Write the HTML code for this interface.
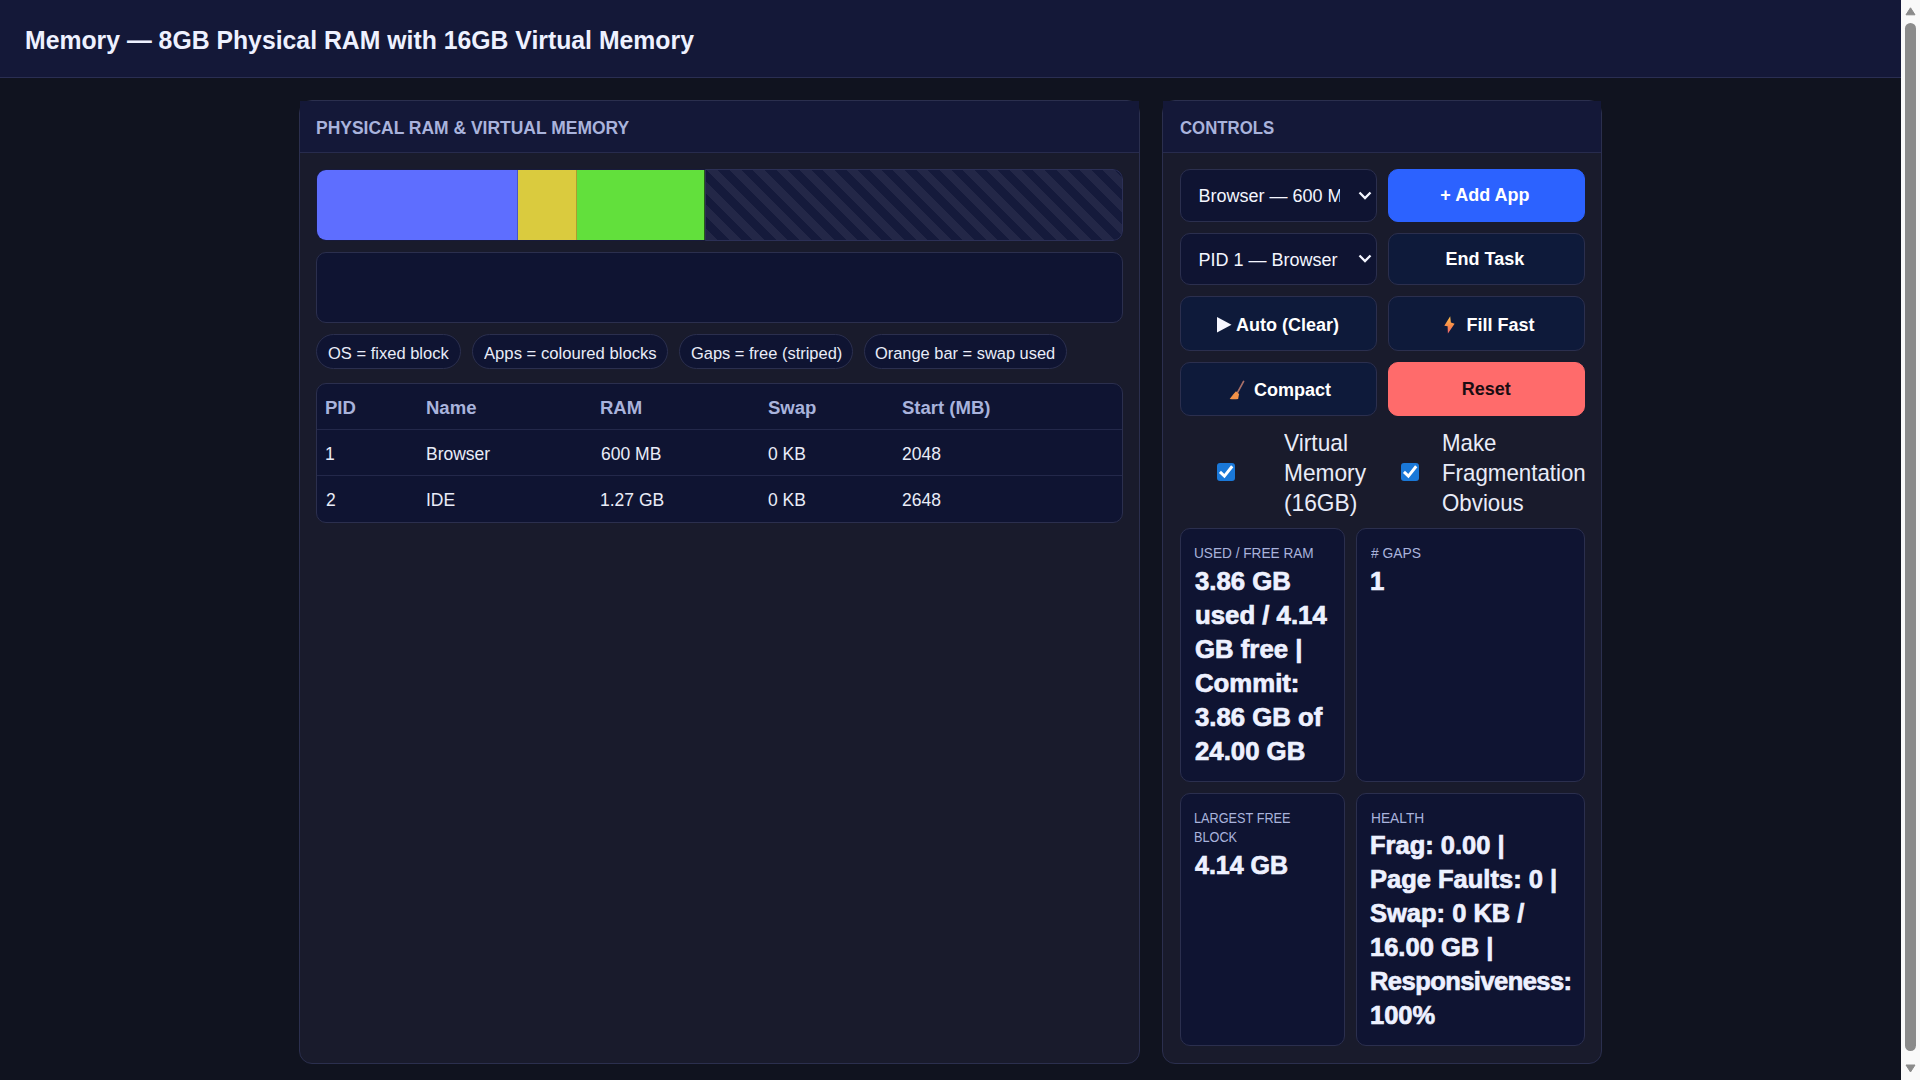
<!DOCTYPE html>
<html><head><meta charset="utf-8"><title>Memory</title>
<style>
html,body{margin:0;padding:0;width:1920px;height:1080px;overflow:hidden;background:#10131f;}
body{position:relative;font-family:"Liberation Sans",sans-serif;}
.b{position:absolute;box-sizing:border-box;}
.t{position:absolute;white-space:nowrap;}
</style></head><body>
<div class="b" style="left:0px;top:0px;width:1901px;height:77px;background:#141838;"></div>
<div class="b" style="left:0px;top:77px;width:1901px;height:1px;background:#2a2e52;"></div>
<div class="t" style="left:24.59px;top:23.70px;font-size:26.16px;line-height:33px;color:#eef1ff;font-weight:700;transform:scaleX(0.9476);transform-origin:0 0;">Memory — 8GB Physical RAM with 16GB Virtual Memory</div>
<div class="b" style="left:299px;top:100px;width:841px;height:964px;background:#191b2c;border:1px solid #2b2f4e;border-radius:13px;"></div>
<div class="b" style="left:300px;top:101px;width:839px;height:51px;background:#141838;"></div>
<div class="b" style="left:300px;top:152px;width:839px;height:1px;background:#272b4d;"></div>
<div class="t" style="left:315.93px;top:115.90px;font-size:18.75px;line-height:23px;color:#a9b3dc;font-weight:700;transform:scaleX(0.9316);transform-origin:0 0;">PHYSICAL RAM &amp; VIRTUAL MEMORY</div>
<div class="b" style="left:1162px;top:100px;width:440px;height:964px;background:#191b2c;border:1px solid #2b2f4e;border-radius:13px;"></div>
<div class="b" style="left:1163px;top:101px;width:438px;height:51px;background:#141838;"></div>
<div class="b" style="left:1163px;top:152px;width:438px;height:1px;background:#272b4d;"></div>
<div class="t" style="left:1179.61px;top:115.50px;font-size:18.9px;line-height:24px;color:#a9b3dc;font-weight:700;transform:scaleX(0.8879);transform-origin:0 0;">CONTROLS</div>
<div class="b" style="left:316px;top:169px;width:807px;height:72px;border-radius:10px;overflow:hidden;background:#171a3c"><div class="b" style="left:1px;top:1px;width:201px;height:70px;background:#5e6eff;border-radius:9px 0 0 9px;box-shadow:inset -1px 0 0 rgba(0,0,0,.22)"></div><div class="b" style="left:202px;top:1px;width:59px;height:70px;background:#dacb3e;box-shadow:inset -1px 0 0 rgba(0,0,0,.22)"></div><div class="b" style="left:261px;top:1px;width:128px;height:70px;background:#62e03c;box-shadow:inset -1px 0 0 rgba(0,0,0,.6)"></div><div class="b" style="left:389px;top:0;width:418px;height:72px;border:1px solid #2c3056;border-radius:0 10px 10px 0;background:repeating-linear-gradient(45deg,#232747 0 8.25px,#151a3b 8.25px 16.5px)"></div></div>
<div class="b" style="left:316px;top:252px;width:807px;height:71px;background:#0f1432;border:1px solid #2b2f4e;border-radius:10px;"></div>
<div class="b" style="left:316px;top:334px;width:145px;height:35px;background:#0f1432;border:1px solid #2b2f4e;border-radius:18px;"></div>
<div class="t" style="left:327.97px;top:342.60px;font-size:16.86px;line-height:21px;color:#e9ecf8;transform:scaleX(0.9795);transform-origin:0 0;">OS = fixed block</div>
<div class="b" style="left:472px;top:334px;width:196px;height:35px;background:#0f1432;border:1px solid #2b2f4e;border-radius:18px;"></div>
<div class="t" style="left:483.77px;top:342.60px;font-size:16.86px;line-height:21px;color:#e9ecf8;transform:scaleX(0.9876);transform-origin:0 0;">Apps = coloured blocks</div>
<div class="b" style="left:679px;top:334px;width:174px;height:35px;background:#0f1432;border:1px solid #2b2f4e;border-radius:18px;"></div>
<div class="t" style="left:690.57px;top:342.60px;font-size:16.86px;line-height:21px;color:#e9ecf8;transform:scaleX(0.9753);transform-origin:0 0;">Gaps = free (striped)</div>
<div class="b" style="left:864px;top:334px;width:203px;height:35px;background:#0f1432;border:1px solid #2b2f4e;border-radius:18px;"></div>
<div class="t" style="left:875.22px;top:342.60px;font-size:16.86px;line-height:21px;color:#e9ecf8;transform:scaleX(0.9736);transform-origin:0 0;">Orange bar = swap used</div>
<div class="b" style="left:316px;top:383px;width:807px;height:140px;background:#0f1432;border:1px solid #2b2f4e;border-radius:10px;"></div>
<div class="b" style="left:317px;top:429px;width:805px;height:1px;background:#23284a;"></div>
<div class="b" style="left:317px;top:475px;width:805px;height:1px;background:#23284a;"></div>
<div class="t" style="left:325.26px;top:396.00px;font-size:18.46px;line-height:23px;color:#a9b3dc;font-weight:700;transform:scaleX(1.0044);transform-origin:0 0;">PID</div>
<div class="t" style="left:426.26px;top:396.00px;font-size:18.46px;line-height:23px;color:#a9b3dc;font-weight:700;transform:scaleX(1.0044);transform-origin:0 0;">Name</div>
<div class="t" style="left:600.16px;top:396.00px;font-size:18.46px;line-height:23px;color:#a9b3dc;font-weight:700;transform:scaleX(1.0044);transform-origin:0 0;">RAM</div>
<div class="t" style="left:768.17px;top:396.00px;font-size:18.46px;line-height:23px;color:#a9b3dc;font-weight:700;transform:scaleX(1.0044);transform-origin:0 0;">Swap</div>
<div class="t" style="left:902.27px;top:396.00px;font-size:18.46px;line-height:23px;color:#a9b3dc;font-weight:700;transform:scaleX(1.0044);transform-origin:0 0;">Start (MB)</div>
<div class="t" style="left:325.17px;top:442.50px;font-size:18.17px;line-height:23px;color:#e9ecf8;transform:scaleX(0.9638);transform-origin:0 0;">1</div>
<div class="t" style="left:426.06px;top:442.50px;font-size:18.17px;line-height:23px;color:#e9ecf8;transform:scaleX(0.9638);transform-origin:0 0;">Browser</div>
<div class="t" style="left:600.51px;top:442.50px;font-size:18.17px;line-height:23px;color:#e9ecf8;transform:scaleX(0.9638);transform-origin:0 0;">600 MB</div>
<div class="t" style="left:768.02px;top:442.50px;font-size:18.17px;line-height:23px;color:#e9ecf8;transform:scaleX(0.9638);transform-origin:0 0;">0 KB</div>
<div class="t" style="left:901.92px;top:442.50px;font-size:18.17px;line-height:23px;color:#e9ecf8;transform:scaleX(0.9638);transform-origin:0 0;">2048</div>
<div class="t" style="left:325.62px;top:488.50px;font-size:18.17px;line-height:23px;color:#e9ecf8;transform:scaleX(0.9638);transform-origin:0 0;">2</div>
<div class="t" style="left:425.88px;top:488.50px;font-size:18.17px;line-height:23px;color:#e9ecf8;transform:scaleX(0.9638);transform-origin:0 0;">IDE</div>
<div class="t" style="left:600.07px;top:488.50px;font-size:18.17px;line-height:23px;color:#e9ecf8;transform:scaleX(0.9638);transform-origin:0 0;">1.27 GB</div>
<div class="t" style="left:768.02px;top:488.50px;font-size:18.17px;line-height:23px;color:#e9ecf8;transform:scaleX(0.9638);transform-origin:0 0;">0 KB</div>
<div class="t" style="left:901.92px;top:488.50px;font-size:18.17px;line-height:23px;color:#e9ecf8;transform:scaleX(0.9638);transform-origin:0 0;">2648</div>
<div class="b" style="left:1180px;top:169px;width:197px;height:53px;background:#0f1432;border:1px solid #2b2f4e;border-radius:10px;"></div>
<div class="b" style="left:1180px;top:169px;width:160px;height:53px;overflow:hidden"><div class="t" style="left:18.52px;top:15.70px;font-size:18px;line-height:22px;color:#f4f6ff">Browser — 600 MB</div></div>
<svg width="14" height="9" viewBox="0 0 14 9" style="position:absolute;left:1357.8px;top:190.5px"><path d="M1.5 1.5 L7 7 L12.5 1.5" fill="none" stroke="#f4f6ff" stroke-width="2.3"/></svg>
<div class="b" style="left:1180px;top:233px;width:197px;height:52px;background:#0f1432;border:1px solid #2b2f4e;border-radius:10px;"></div>
<div class="b" style="left:1180px;top:233px;width:160px;height:52px;overflow:hidden"><div class="t" style="left:18.52px;top:15.70px;font-size:18px;line-height:22px;color:#f4f6ff">PID 1 — Browser</div></div>
<svg width="14" height="9" viewBox="0 0 14 9" style="position:absolute;left:1357.8px;top:254.0px"><path d="M1.5 1.5 L7 7 L12.5 1.5" fill="none" stroke="#f4f6ff" stroke-width="2.3"/></svg>
<div class="b" style="left:1388px;top:169px;width:197px;height:53px;background:#2c62ff;border:1px solid #2c62ff;border-radius:10px;"></div>
<div class="t" style="left:1440.34px;top:183.90px;font-size:18px;line-height:22px;color:#ffffff;font-weight:700;">+ Add App</div>
<div class="b" style="left:1388px;top:233px;width:197px;height:52px;background:#0e1a3a;border:1px solid #2b2f4e;border-radius:10px;"></div>
<div class="t" style="left:1445.60px;top:247.90px;font-size:18px;line-height:22px;color:#ffffff;font-weight:700;">End Task</div>
<div class="b" style="left:1180px;top:296px;width:197px;height:55px;background:#0e1a3a;border:1px solid #2b2f4e;border-radius:10px;"></div>
<div class="t" style="left:1235.95px;top:314.10px;font-size:18px;line-height:22px;color:#ffffff;font-weight:700;">Auto (Clear)</div>
<div class="b" style="left:1388px;top:296px;width:197px;height:55px;background:#0e1a3a;border:1px solid #2b2f4e;border-radius:10px;"></div>
<div class="t" style="left:1466.60px;top:314.00px;font-size:18px;line-height:22px;color:#ffffff;font-weight:700;">Fill Fast</div>
<div class="b" style="left:1180px;top:362px;width:197px;height:54px;background:#0e1a3a;border:1px solid #2b2f4e;border-radius:10px;"></div>
<div class="t" style="left:1253.96px;top:378.60px;font-size:18px;line-height:22px;color:#ffffff;font-weight:700;">Compact</div>
<div class="b" style="left:1388px;top:362px;width:197px;height:54px;background:#ff6b6b;border:1px solid #ff6b6b;border-radius:10px;"></div>
<div class="t" style="left:1461.70px;top:378.00px;font-size:18px;line-height:22px;color:#1a0d12;font-weight:700;">Reset</div>
<svg width="16" height="16" viewBox="0 0 16 16" style="position:absolute;left:1216.5px;top:316.8px"><path d="M0 0 L14.5 7.8 L0 15.6 Z" fill="#f6f7ff"/></svg>
<svg width="12" height="18" viewBox="0 0 12 18" style="position:absolute;left:1443.5px;top:315.8px"><defs><linearGradient id="lg" x1="0" y1="0" x2="0" y2="1"><stop offset="0" stop-color="#fcc24c"/><stop offset="0.55" stop-color="#f88a48"/><stop offset="1" stop-color="#ee6470"/></linearGradient></defs><path d="M6.2 0.2 L6.9 6.6 L10.6 7.7 L3.9 17.5 L3.6 10.3 L0.3 9.7 Z" fill="url(#lg)"/></svg>
<svg width="18" height="20" viewBox="0 0 18 20" style="position:absolute;left:1228.5px;top:379.5px"><path d="M14.6 1.4 L8.6 12.3" stroke="#a87068" stroke-width="1.7" stroke-linecap="round"/><path d="M7 11.3 L10.1 14 L9.1 19 Q5 19.4 0.7 19 Q4 14.5 7 11.3 Z" fill="#f29248"/></svg>
<svg width="18" height="18" viewBox="0 0 18 18" style="position:absolute;left:1217px;top:463px"><rect x="0" y="0" width="18" height="18" rx="3" fill="#1a78d8"/><path d="M4 9.9 L7.4 13.1 L14.3 4.4" fill="none" stroke="#fff" stroke-width="2.9" stroke-linecap="square"/></svg>
<svg width="18" height="18" viewBox="0 0 18 18" style="position:absolute;left:1400.5px;top:463px"><rect x="0" y="0" width="18" height="18" rx="3" fill="#1a78d8"/><path d="M4 9.9 L7.4 13.1 L14.3 4.4" fill="none" stroke="#fff" stroke-width="2.9" stroke-linecap="square"/></svg>
<div class="t" style="left:1284.30px;top:427.80px;font-size:23.26px;line-height:30px;color:#e9ecf8;transform:scaleX(0.9772);transform-origin:0 0;">Virtual<br>Memory<br>(16GB)</div>
<div class="t" style="left:1441.77px;top:428.00px;font-size:23.26px;line-height:30px;color:#e9ecf8;transform:scaleX(0.9587);transform-origin:0 0;">Make<br>Fragmentation<br>Obvious</div>
<div class="b" style="left:1180px;top:528px;width:165px;height:254px;background:#0f1432;border:1px solid #2b2f4e;border-radius:10px;"></div>
<div class="b" style="left:1356px;top:528px;width:229px;height:254px;background:#0f1432;border:1px solid #2b2f4e;border-radius:10px;"></div>
<div class="b" style="left:1180px;top:793px;width:165px;height:253px;background:#0f1432;border:1px solid #2b2f4e;border-radius:10px;"></div>
<div class="b" style="left:1356px;top:793px;width:229px;height:253px;background:#0f1432;border:1px solid #2b2f4e;border-radius:10px;"></div>
<div class="t" style="left:1193.95px;top:543.40px;font-size:15.26px;line-height:20px;color:#a9b3dc;transform:scaleX(0.8939);transform-origin:0 0;">USED / FREE RAM</div>
<div class="t" style="left:1370.84px;top:543.40px;font-size:15.26px;line-height:20px;color:#a9b3dc;transform:scaleX(0.9069);transform-origin:0 0;"># GAPS</div>
<div class="t" style="left:1193.96px;top:807.75px;font-size:15.26px;line-height:19.5px;color:#a9b3dc;transform:scaleX(0.8334);transform-origin:0 0;">LARGEST FREE<br>BLOCK</div>
<div class="t" style="left:1370.87px;top:807.50px;font-size:15.26px;line-height:20px;color:#a9b3dc;transform:scaleX(0.9017);transform-origin:0 0;">HEALTH</div>
<div class="t" style="left:1195.01px;top:564.00px;font-size:25.58px;line-height:34px;color:#eef1ff;font-weight:700;transform:scaleX(1.0070);transform-origin:0 0;-webkit-text-stroke:0.7px #eef1ff;">3.86 GB<br>used / 4.14<br>GB free |<br>Commit:<br>3.86 GB of<br>24.00 GB</div>
<div class="t" style="left:1370.38px;top:564.00px;font-size:25.58px;line-height:34px;color:#eef1ff;font-weight:700;transform:scaleX(1.0070);transform-origin:0 0;-webkit-text-stroke:0.7px #eef1ff;">1</div>
<div class="t" style="left:1194.82px;top:847.50px;font-size:25.58px;line-height:34px;color:#eef1ff;font-weight:700;transform:scaleX(0.9761);transform-origin:0 0;-webkit-text-stroke:0.7px #eef1ff;">4.14 GB</div>
<div class="t" style="left:1369.79px;top:827.75px;font-size:25.58px;line-height:34px;color:#eef1ff;font-weight:700;transform:scaleX(0.9970);transform-origin:0 0;-webkit-text-stroke:0.7px #eef1ff;">Frag: 0.00 |<br>Page Faults: 0 |<br>Swap: 0 KB /<br>16.00 GB |<br><span style="letter-spacing:-0.55px">Responsiveness:</span><br>100%</div>
<div class="b" style="left:1901px;top:0px;width:19px;height:1080px;background:#f9f9f9;"></div>
<svg width="19" height="1080" style="position:absolute;left:1901px;top:0"><path d="M9.5 7.8 L14 14.8 L5 14.8 Z" fill="#8a8a8a" stroke="#8a8a8a" stroke-width="1" stroke-linejoin="round"/><rect x="4" y="23" width="11" height="1028" rx="5.5" fill="#8b8b8b"/><path d="M5 1065 L14 1065 L9.5 1072 Z" fill="#8a8a8a" stroke="#8a8a8a" stroke-width="1" stroke-linejoin="round"/></svg>
</body></html>
